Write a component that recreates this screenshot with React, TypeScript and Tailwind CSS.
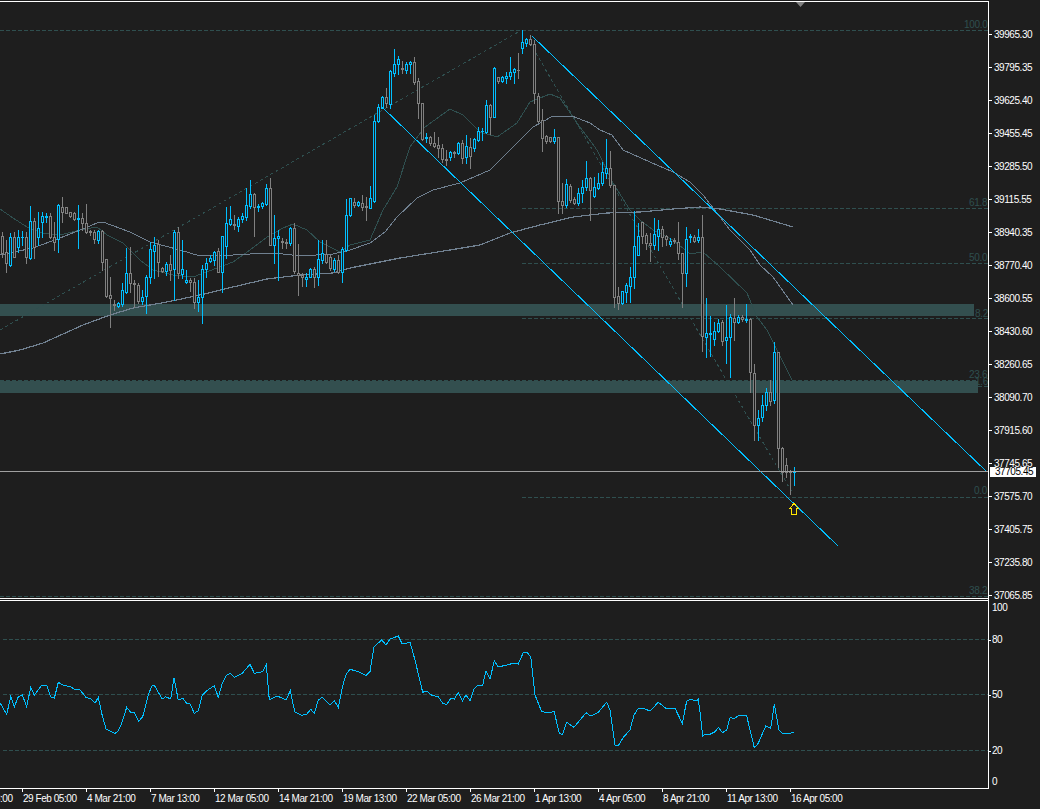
import React from "react";

type C = [number, number, number, number, number];

const s1: C[] = [
[155,167,218,230,0],[180,215,250,275,0],[160,172,255,258,1],[155,170,230,232,0],[150,170,200,215,1],[152,170,172,195,1],[155,170,232,250,0],[78,124,235,238,1],[115,124,200,235,0],[95,143,170,195,1],
[95,108,125,170,1],[100,107,110,125,1],[100,107,172,175,0],[125,172,185,210,0],[72,75,178,215,1],[52,80,95,125,0],[80,82,100,100,0],[97,97,107,110,0],[97,100,117,120,0],[75,115,118,205,1],
[100,115,128,150,0],[72,128,155,158,0],[150,153,155,165,0],[150,157,178,190,0],[150,154,180,190,1],[150,154,245,270,0],[238,238,348,350,0],[290,345,355,440,0],[360,373,375,390,0],[365,370,378,382,1],
[310,330,372,378,1],[203,280,335,338,1],[200,280,308,335,0],[300,309,311,380,0],[310,315,362,370,0],[330,350,362,372,1],[285,290,347,400,1],[185,208,292,308,1],[170,195,212,295,1],[180,192,245,288,0],
[262,265,272,275,0],[245,252,272,285,1],[225,252,270,300,0],[150,155,268,360,1],[140,155,280,295,0],[180,268,282,295,1],[270,300,305,310,1],[295,300,305,332,0],[295,305,365,385,0],[300,350,365,392,1],
[255,268,352,428,1],[235,250,268,290,1],[225,235,242,245,1],[212,215,240,255,1],[205,212,275,275,0],[168,168,275,335,1],[80,130,197,235,1],[78,118,132,135,1],[105,132,135,148,0],[110,118,137,152,1],
[98,108,118,125,1],[25,75,110,120,1],[0,42,78,85,1],[38,42,80,168,0],[72,77,80,92,1],[65,70,77,85,1],[12,25,72,75,1],[-6,25,195,195,0],[105,175,195,248,1],[150,168,175,300,1],
[175,184,186,205,0],[178,186,188,203,0],[140,145,190,195,1],[130,145,272,278,0],[192,278,285,345,0],[280,285,290,318,0],[280,290,298,318,1],[265,268,290,292,1],[260,268,290,322,0],[180,237,292,315,1],
[180,220,240,250,1],[180,222,245,250,0],[225,230,265,270,0],[235,240,268,272,1],[225,240,275,280,0],[200,208,275,305,1],[58,105,210,212,1],
];
const s2: C[] = [
[533,535,585,588,1],[535,545,555,560,0],[543,547,554,558,1],[525,548,562,570,0],[530,559,561,600,0],[498,535,565,565,1],[285,303,542,545,1],[252,262,303,305,1],[228,230,265,265,1],[205,230,250,262,0],
[150,153,252,265,1],[88,133,158,168,1],[108,118,133,162,1],[122,144,146,158,0],[125,132,150,158,1],[122,127,133,158,1],[112,127,185,192,0],[175,183,250,293,0],[250,250,357,360,0],[340,351,353,366,1],
[348,352,370,375,0],[335,370,378,382,0],[352,376,384,410,0],[372,385,418,425,0],[390,418,420,435,0],[392,397,412,420,1],[392,397,399,412,0],[365,368,400,402,1],[360,368,415,428,0],[345,378,412,428,1],
[355,380,407,445,0],[355,358,385,392,1],[322,333,360,362,1],[325,332,334,360,1],[240,256,335,340,1],[252,255,290,342,0],[142,145,290,292,1],[170,172,183,188,0],[168,170,183,185,1],[155,167,173,188,1],
[110,155,167,178,1],[143,148,157,190,1],[100,149,151,175,0],[30,67,83,100,1],[55,58,68,78,1],[45,58,72,75,0],[60,72,220,248,0],[220,227,302,305,0],[268,300,355,392,0],[345,348,362,370,0],
[350,352,362,365,0],[328,352,362,370,1],[350,352,542,578,0],[490,542,555,578,0],[478,493,555,560,1],[492,497,540,545,0],[530,538,548,552,0],[505,520,550,555,1],[480,500,520,545,1],[423,475,500,510,1],
];
const s3: C[] = [
[140,145,180,270,0],[140,172,197,200,1],[130,160,175,178,1],[95,127,160,165,1],[28,115,130,145,1],[62,115,165,170,0],[165,165,502,530,0],[472,497,520,537,0],[482,482,520,522,1],[460,464,485,515,1],
[410,442,467,515,1],[243,348,440,475,1],[280,318,375,375,1],[277,277,317,340,0],[310,315,338,358,0],[310,338,345,392,0],[265,313,345,358,1],[270,298,318,360,1],[288,298,320,348,0],[315,317,328,345,0],
[323,334,342,348,1],[325,331,333,340,0],[277,335,370,388,0],[370,370,428,530,0],[290,328,428,468,1],[312,319,321,335,1],[315,322,332,335,0],[298,322,330,335,1],[255,322,618,662,0],
];
const s4: C[] = [
[25,128,140,200,1],[78,129,131,197,1],[95,122,148,165,1],[88,100,122,125,1],[90,97,152,165,0],[45,142,150,218,1],[72,82,142,260,1],[25,85,97,150,0],[75,82,95,100,1],[75,82,88,92,0],
[42,87,89,95,1],[85,88,247,305,0],[222,250,405,450,0],[360,385,405,450,1],[315,346,382,392,1],[295,305,346,360,1],[270,305,332,345,0],[155,187,330,338,1],[187,187,475,530,0],[472,475,545,572,0],
[505,525,545,560,0],[540,544,546,612,0],[532,544,546,585,1],
];

const candles: C[] = [
  ...s1.map((c) => off(c, 180)),
  ...s2.map((c) => off(c, 20)),
  ...s3.map((c) => off(c, 130)),
  ...s4.map((c) => off(c, 290)),
];
function off(c: C, o: number): C {
  return [
    Math.round(o + c[0] / 3),
    Math.round(o + c[1] / 3),
    Math.round(o + c[2] / 3),
    Math.round(o + c[3] / 3),
    c[4],
  ];
}

const longMA = "0,354 20,350 43,343 83,325 110,315 133,308 167,302 200,295 233,287 267,279 300,275 333,273 350,268 375,263 400,258 450,250 480,245 510,233 540,225 573,217 607,213 640,212 673,209 700,207 720,209 753,215 793,227";
const midMA = "0,255 33,248 60,238 80,230 97,223 103,222 130,232 150,242 180,250 200,256 233,255 267,253 283,254 300,256 333,254 350,250 370,243 385,232 397,217 417,198 433,190 460,183 490,170 510,150 533,127 553,116 572,116 590,123 600,130 612,135 623,150 650,162 673,172 690,182 703,195 717,213 730,230 750,250 760,265 773,277 793,305";
const fastMA = "0,209 13,218 27,227 43,233 60,235 80,230 97,227 107,235 123,243 140,260 153,270 173,275 193,277 217,268 233,262 250,250 267,237 283,228 293,224 307,230 320,242 340,252 350,245 370,240 383,210 397,187 410,147 425,127 450,109 463,115 480,132 497,137 517,123 530,102 550,94 560,98 577,123 597,150 613,183 630,210 640,220 653,230 673,240 690,254 703,252 720,267 747,293 757,317 767,330 792,380";

const conv = (pts: number[][], xo: number, yo: number) =>
  pts.map(([x, y]) => `${(xo + x / 3).toFixed(1)},${(yo + y / 3).toFixed(1)}`).join(" ");

const rsi = [
  conv([[0,368],[20,403],[32,350],[43,380],[55,350],[67,345],[80,380],[92,322],[103,345],[125,316],[140,316],[152,350],[163,355],[175,307],[190,316],[212,320],[222,327],[240,330],[258,352],[272,357],[285,370],[295,352],[305,400],[318,447],[345,460],[355,453],[365,430],[380,382],[392,397],[403,397],[416,424],[428,410],[445,345],[455,318],[463,316],[487,357],[497,350],[512,357],[522,295],[535,360],[548,355],[560,370],[570,372],[583,400],[595,392],[607,345],[620,332],[643,317],[655,352],[667,310],[680,285],[690,280],[703,292],[727,280],[750,253],[763,280],[788,275],[799,253],[808,360],[832,348],[858,360],[871,332],[884,395],[905,406],[920,403],[932,388],[943,400],[955,360],[967,352],[990,375],[1003,362],[1015,382],[1030,310],[1040,280]], 0, 580),
  conv([[0,148],[25,155],[48,167],[60,155],[72,80],[95,60],[108,75],[120,57],[145,48],[157,72],[180,67],[195,120],[218,217],[230,213],[245,226],[265,230],[278,250],[290,254],[302,235],[313,237],[325,217],[337,243],[348,225],[360,242],[372,208],[385,195],[398,195],[408,152],[420,178],[433,122],[445,141],[470,135],[490,130],[505,132],[520,98],[530,96],[542,110],[555,225],[575,275],[600,278],[612,273],[628,340],[637,344],[650,307],[672,322],[708,278],[722,288],[745,277],[770,247],[780,270],[795,375],[805,377],[820,352],[840,330],[852,285],[865,265],[880,265],[900,273],[925,247],[950,267],[975,265],[997,310],[1010,243],[1020,238],[1040,243],[1045,238],[1050,277]], 350, 620),
  conv([[8,528],[15,522],[30,523],[45,515],[55,502],[67,518],[80,510],[90,473],[103,475],[118,466],[140,468],[163,563],[175,550],[197,498],[212,505],[223,433],[237,510],[247,520],[270,520],[282,517]], 700, 560),
].join(" ");

const prices = ["39965.30","39795.35","39625.40","39455.45","39285.50","39115.55","38940.35","38770.40","38600.55","38430.60","38260.65","38090.70","37915.60","37745.65","37575.70","37405.75","37235.80","37065.85"];
const times = ["26 Feb 13:00","29 Feb 05:00","4 Mar 21:00","7 Mar 13:00","12 Mar 05:00","14 Mar 21:00","19 Mar 13:00","22 Mar 05:00","26 Mar 21:00","1 Apr 13:00","4 Apr 05:00","8 Apr 21:00","11 Apr 13:00","16 Apr 05:00"];

const BG = "#1e1e1e";
const TEAL = "#2f4f4f";
const BLUE = "#00bfff";
const GRAY = "#808080";

const Fib = ({ y, x1 = 522 }: { y: number; x1?: number }) => (
  <line x1={x1} x2={988} y1={y + 0.5} y2={y + 0.5} stroke={TEAL} strokeDasharray="4 2" />
);
const FibLabel = ({ x, y, t }: { x: number; y: number; t: string }) => (
  <text x={x} y={y} fill={TEAL} fontSize={10} letterSpacing={-0.3}>{t}</text>
);

function Candles() {
  return (
    <g shapeRendering="crispEdges">
      {candles.map(([h, t, b, l, up], i) => {
        const cx = 2 + 4 * i;
        const col = up ? BLUE : GRAY;
        return (
          <g key={i}>
            <rect x={cx} y={h} width={1} height={Math.max(1, l - h + 1)} fill={col} />
            <rect x={cx - 1} y={t} width={3} height={Math.max(1, b - t + 1)} fill={col} />
            {b - t >= 2 && <rect x={cx} y={t + 1} width={1} height={b - t - 1} fill={BG} />}
          </g>
        );
      })}
    </g>
  );
}

function MainChart() {
  return (
    <svg width={988} height={596} viewBox="0 2 988 596" className="block" style={{ fontFamily: '"Liberation Sans", sans-serif' }}>
      <polygon points="796,2 805,2 800.5,7" fill={GRAY} />
      <g shapeRendering="crispEdges">
        <Fib y={30} x1={0} />
        <Fib y={208} />
        <Fib y={263} />
        <Fib y={318} />
        <Fib y={386} />
        <Fib y={497} />
        <Fib y={596} x1={0} />
        <rect x={0} y={304} width={974} height={12} fill="#334f4f" />
        <rect x={0} y={381} width={978} height={12} fill="#334f4f" />
        <line x1={0} x2={978} y1={380.5} y2={380.5} stroke={TEAL} strokeDasharray="4 2" />
        <line x1={0} y1={330} x2={520} y2={31} stroke={TEAL} strokeDasharray="3 3" />
        <line x1={530} y1={43} x2={793} y2={494} stroke={TEAL} strokeDasharray="3 3" />
        <polyline points={fastMA} fill="none" stroke={TEAL} />
        <polyline points={midMA} fill="none" stroke="#708090" />
        <polyline points={longMA} fill="none" stroke="#708090" strokeWidth={1.2} />
      </g>
      <FibLabel x={964} y={28} t="100.0" />
      <FibLabel x={969} y={206} t="61.8" />
      <FibLabel x={969} y={261} t="50.0" />
      <FibLabel x={975} y={317} t="8.2" />
      <FibLabel x={969} y={378} t="23.6" />
      <FibLabel x={975} y={385} t="1.6" />
      <FibLabel x={974} y={494} t="0.0" />
      <FibLabel x={969} y={594} t="38.2" />
      <Candles />
      <g shapeRendering="crispEdges">
        <line x1={532} y1={36} x2={987} y2={472} stroke={BLUE} />
        <line x1={382} y1={107} x2={838} y2={546} stroke={BLUE} />
        <line x1={0} x2={988} y1={471.5} y2={471.5} stroke="#a0a0a0" />
      </g>
      <path d="M794 503.5 L798.5 508.5 L796.5 508.5 L796.5 514.5 L791.5 514.5 L791.5 508.5 L789.5 508.5 Z" fill={BG} stroke="#ffe600" strokeWidth={1} shapeRendering="crispEdges" />
    </svg>
  );
}

function RsiChart() {
  return (
    <svg width={988} height={187} viewBox="0 601 988 187" className="block">
      <g shapeRendering="crispEdges">
        {[639, 694, 750].map((y) => (
          <line key={y} x1={3} x2={988} y1={y + 0.5} y2={y + 0.5} stroke={TEAL} strokeDasharray="4 2" />
        ))}
        <polyline points={rsi} fill="none" stroke={BLUE} />
      </g>
    </svg>
  );
}

export default function App() {
  return (
    <div
      className="w-[1040px] h-[809px] bg-[#1e1e1e] overflow-hidden flex flex-col pt-px text-[10px] leading-none text-white tracking-[-0.45px]"
      style={{ fontFamily: '"Liberation Sans", Arial, sans-serif' }}
    >
      <div className="flex h-[598px]">
        <div className="w-[988px] h-[598px] border-y border-white">
          <MainChart />
        </div>
        <div className="relative w-[52px] border-l border-white flex flex-col gap-[24px] pt-[29px]">
          {prices.map((p) => (
            <div key={p} className="h-[9px] flex items-center shrink-0">
              <div className="w-[3px] h-px bg-white" />
              <span className="ml-[2px] mt-px">{p}</span>
            </div>
          ))}
          <div className="absolute left-px top-[466px] w-[46px] h-[10px] bg-white text-black flex items-center pl-[5px]">37705.45</div>
        </div>
      </div>
      <div className="flex h-[190px]">
        <div className="w-[988px] pt-px">
          <div className="h-[189px] border-y border-white">
            <RsiChart />
          </div>
        </div>
        <div className="w-[52px] border-l border-white flex flex-col">
          <div className="h-[12px] mt-[3px] pl-[3px] flex items-center">100</div>
          <div className="h-[12px] mt-[20px] flex items-center"><div className="w-[2px] h-px bg-white" /><span className="ml-px">80</span></div>
          <div className="h-[12px] mt-[43px] flex items-center"><div className="w-[2px] h-px bg-white" /><span className="ml-px">50</span></div>
          <div className="h-[12px] mt-[44px] flex items-center"><div className="w-[2px] h-px bg-white" /><span className="ml-px">20</span></div>
          <div className="h-[12px] mt-[19px] pl-[3px] flex items-center">0</div>
        </div>
      </div>
      <div className="flex flex-1 ml-[-42px]">
        {times.map((t) => (
          <div key={t} className="w-[64px] shrink-0 flex flex-col">
            <div className="w-px h-[3px] bg-white" />
            <span className="pl-px mt-[2px] whitespace-nowrap">{t}</span>
          </div>
        ))}
      </div>
    </div>
  );
}
